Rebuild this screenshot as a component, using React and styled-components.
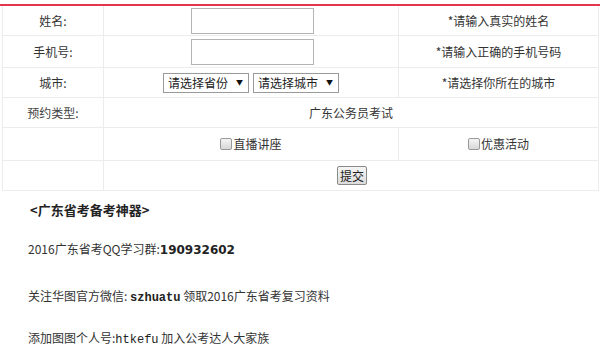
import React from 'react';
import styled, { createGlobalStyle } from 'styled-components';

const GlobalStyle = createGlobalStyle`
  body {
    margin: 0;
    background: #fff;
    font-family: "Noto Sans CJK SC", "Noto Sans", sans-serif;
    color: #333;
  }
`;

const Page = styled.div`
  padding-top: 4px;
  width: 600px;
`;

const FormBox = styled.div`
  border-top: 2px solid #e4354a;
  padding: 0 2px;
`;

const Table = styled.table`
  width: 596px;
  border-collapse: collapse;
  table-layout: fixed;
  font-size: 12px;
`;

const Cell = styled.td`
  border: 1px solid #ececec;
  border-top: ${({ $first }) => ($first ? 'none' : '1px solid #ececec')};
  height: ${({ $h }) => $h || 29}px;
  padding: 0;
  text-align: center;
  vertical-align: middle;
  color: ${({ $muted }) => ($muted ? '#444' : '#333')};
  line-height: 1;
`;

const TextInput = styled.input`
  width: 123px;
  height: 26px;
  box-sizing: border-box;
  border: 1px solid #b4b4b4;
  margin: 0 0 0 2px;
  padding: 0;
  vertical-align: middle;
`;

const SelectWrap = styled.span`
  position: relative;
  display: inline-block;
  margin: 0 2px;
  vertical-align: middle;
`;

const Select = styled.select`
  appearance: none;
  -webkit-appearance: none;
  display: block;
  height: 20px;
  width: ${({ $w }) => $w}px;
  box-sizing: border-box;
  border: 1px solid #9a9a9a;
  border-radius: 0;
  background: #fff;
  font-family: "Noto Sans CJK SC", sans-serif;
  font-size: 12px;
  line-height: 18px;
  color: #222;
  padding: 0 0 0 4px;
`;

const Arrow = styled.span`
  position: absolute;
  right: 6px;
  top: 6px;
  font-size: 7px;
  line-height: 1;
  color: #111;
  pointer-events: none;
`;

const CheckLabel = styled.label`
  display: inline-flex;
  align-items: center;
  font-size: 12px;
  color: #333;
`;

const Box = styled.span`
  display: inline-block;
  width: 10px;
  height: 10px;
  border: 1px solid #999;
  border-radius: 2px;
  background: linear-gradient(#f4f4f4, #d8d8d8);
  margin-right: 1px;
`;

const Submit = styled.button`
  font-family: "Noto Sans CJK SC", sans-serif;
  font-size: 12px;
  height: 19px;
  padding: 0 2px;
  border: 1px solid #8a8a8a;
  border-radius: 2px;
  background: linear-gradient(#f6f6f6, #dcdcdc);
  color: #222;
  line-height: 1;
  margin-left: 2px;
`;

const Info = styled.div`
  padding: 9px 0 0 28px;
  font-size: 12px;
  color: #333;
`;

const Heading = styled.p`
  margin: 0 0 22px 2px;
  font-size: 13px;
  font-weight: bold;
  color: #222;
`;

const Line = styled.p`
  margin: 0 0 ${({ $gap }) => $gap}px;
  line-height: 16px;
`;

const Num = styled.b`
  font-family: "DejaVu Sans", sans-serif;
  font-size: 12px;
  color: #222;
`;

const Mono = styled.span`
  font-family: "Liberation Mono", monospace;
  font-weight: ${({ $bold }) => ($bold ? 'bold' : 'normal')};
  font-size: 12px;
  color: #222;
`;

const Dropdown = ({ label, width }) => (
  <SelectWrap>
    <Select $w={width}><option>{label}</option></Select>
    <Arrow>▼</Arrow>
  </SelectWrap>
);

export default function App() {
  return (
    <Page>
      <GlobalStyle />
      <FormBox>
        <Table>
          <colgroup>
            <col style={{ width: 101 }} />
            <col style={{ width: 295 }} />
            <col style={{ width: 200 }} />
          </colgroup>
          <tbody>
            <tr>
              <Cell $first $h={29}>姓名:</Cell>
              <Cell $first><TextInput /></Cell>
              <Cell $first>*请输入真实的姓名</Cell>
            </tr>
            <tr>
              <Cell $h={31}>手机号:</Cell>
              <Cell><TextInput /></Cell>
              <Cell>*请输入正确的手机号码</Cell>
            </tr>
            <tr>
              <Cell $h={29}>城市:</Cell>
              <Cell>
                <Dropdown label="请选择省份" width={86} />
                <Dropdown label="请选择城市" width={86} />
              </Cell>
              <Cell>*请选择你所在的城市</Cell>
            </tr>
            <tr>
              <Cell $h={28} $muted>预约类型:</Cell>
              <Cell colSpan={2}>广东公务员考试</Cell>
            </tr>
            <tr>
              <Cell $h={32}></Cell>
              <Cell><CheckLabel><Box />直播讲座</CheckLabel></Cell>
              <Cell><CheckLabel><Box />优惠活动</CheckLabel></Cell>
            </tr>
            <tr>
              <Cell $h={29}></Cell>
              <Cell colSpan={2}><Submit>提交</Submit></Cell>
            </tr>
          </tbody>
        </Table>
      </FormBox>
      <Info>
        <Heading>&lt;广东省考备考神器&gt;</Heading>
        <Line $gap={30}>2016广东省考QQ学习群:<Num>190932602</Num></Line>
        <Line $gap={24}>关注华图官方微信: <Mono $bold>szhuatu</Mono> 领取2016广东省考复习资料</Line>
        <Line $gap={0}>添加图图个人号:<Mono>htkefu</Mono> 加入公考达人大家族</Line>
      </Info>
    </Page>
  );
}
